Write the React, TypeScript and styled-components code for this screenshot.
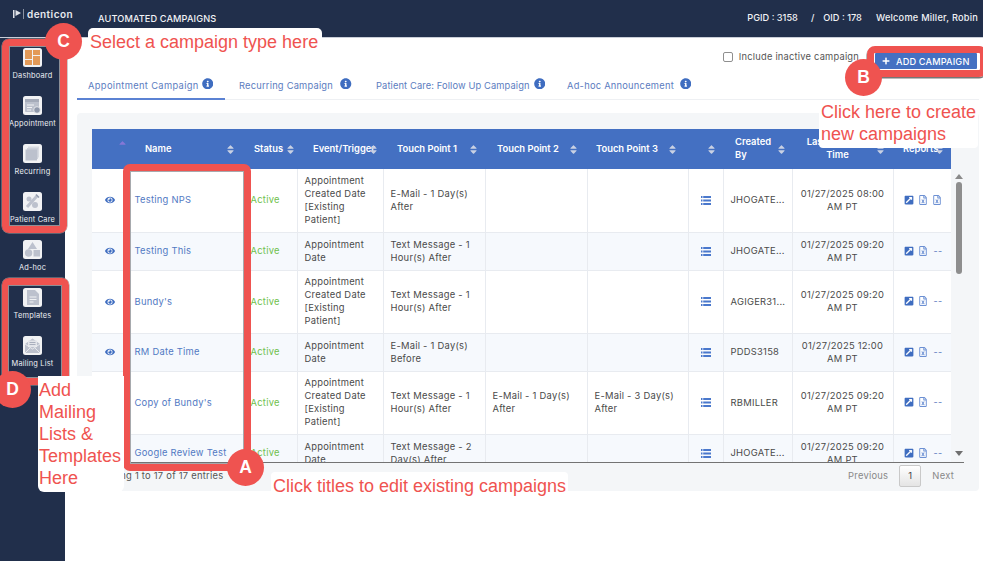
import React from "react";
import styled, { createGlobalStyle } from "styled-components";
import { FaEye, FaInfoCircle, FaExternalLinkSquareAlt, FaRegFileExcel, FaPlus, FaSort, FaSortUp } from "react-icons/fa";

const Global = createGlobalStyle`
  html, body { margin: 0; padding: 0; background: #fff; }
  body { font-family: Inter, "Open Sans", sans-serif; }
  * { box-sizing: border-box; }
`;

const Page = styled.div`
  position: relative; width: 983px; height: 561px; overflow: hidden;
  display: flex; flex-direction: column; background: #fff;
`;
const Header = styled.header`
  height: 38px; background: #212f4b; border-bottom: 1px solid #c9ced8; color: #fff;
  display: flex; align-items: center; padding-right: 5px; flex: none;
`;
const Logo = styled.div`
  width: 98px; padding-left: 13px; padding-bottom: 9px; display: flex; align-items: center; gap: 3px;
  font-size: 10px; font-weight: 600; letter-spacing: .45px; color: #e8eaef;
`;
const Title = styled.div`font-size: 9.2px; font-weight: 500; letter-spacing: .12px; color: #f2f3f6;`;
const HeaderRight = styled.div`
  margin-left: auto; display: flex; align-items: center; font-size: 9.2px; font-weight: 500; padding-bottom: 3px;
  color: #f2f3f6;
`;
const Sep = styled.span`margin: 0 9px 0 13px;`;
const Welcome = styled.span`margin-left: 14px; letter-spacing: .24px;`;

const Body = styled.div`flex: 1; display: flex; min-height: 0;`;
const Sidebar = styled.nav`
  width: 65px; flex: none; background: #212f4b; padding-top: 10px;
  display: flex; flex-direction: column; align-items: center;
`;
const NavItem = styled.div`
  height: 48px; width: 100%; display: flex; flex-direction: column; align-items: center;
  font-size: 7.4px; color: #eef0f4; letter-spacing: .2px; white-space: nowrap;
`;
const Tile = styled.div`
  width: 19px; height: 19px; border-radius: 2.5px; background: #f1f2f4; margin-bottom: 4px;
  display: flex; align-items: center; justify-content: center;
`;

const Main = styled.main`flex: 1; padding: 0 4px 0 12px; min-width: 0;`;
const OptionRow = styled.div`
  height: 36px; display: flex; align-items: center; justify-content: flex-end; padding-right: 120px; padding-top: 1px;
  font-size: 9.3px; color: #555; gap: 6px; letter-spacing: .22px;
`;
const Check = styled.span`
  width: 10px; height: 10px; border: 1px solid #8f8f8f; border-radius: 2px; background: #fff; flex: none;
`;
const Tabs = styled.div`
  height: 26px; display: flex; border-bottom: 1.5px solid #eef0f3;
`;
const Tab = styled.div<{ $active?: boolean; $w: number; $pad: number; $gap: number; $track: number }>`
  width: ${p => p.$w}px; height: 26px; padding-left: ${p => p.$pad}px; padding-bottom: 2px;
  display: flex; align-items: center; gap: ${p => p.$gap}px; white-space: nowrap;
  font-size: 9.3px; letter-spacing: ${p => p.$track}px; color: #5b7cc0;
  border-bottom: 2px solid ${p => (p.$active ? "#5b82d3" : "transparent")};
  svg { color: #3f6dc0; font-size: 11.5px; flex: none; margin-top: -3px; }
`;
const Panel = styled.section`
  margin-top: 13px; height: 378px; background: #f4f6f8; border-radius: 4px; padding: 16px 14px 0 15px;
`;
const HeadTable = styled.table`
  table-layout: fixed; width: 859px; border-collapse: collapse; background: #4470c2; color: #fff;
`;
const Th = styled.th`
  height: 40px; padding: 0; font-size: 9.4px; font-weight: 600; text-align: left; line-height: 12.6px;
`;
const ThInner = styled.div<{ $l: number; $r: number; $center?: boolean }>`
  display: flex; align-items: center; padding-left: ${p => p.$l}px; padding-right: ${p => p.$r}px;
  span { flex: 1; min-width: 0; text-align: ${p => (p.$center ? "center" : "left")}; white-space: pre-line; }
  svg { color: #c9d1e3; font-size: 11px; flex: none; margin-left: -4px; }
`;
const EyeHead = styled.div`
  display: flex; justify-content: flex-end; padding: 0 2px 8px 0;
  svg { color: #8577d6; font-size: 11px; }
`;
const BodyArea = styled.div`display: flex; height: 293px;`;
const BodyClip = styled.div`width: 859px; height: 293px; overflow: hidden; flex: none;`;
const BodyTable = styled.table`
  table-layout: fixed; width: 859px; border-collapse: collapse; font-size: 9.4px; color: #4a4a4a; line-height: 12.8px;
`;
const Tr = styled.tr<{ $h: number }>`
  height: ${p => p.$h}px;
  &:nth-child(even) { background: #f6f9fd; }
  &:nth-child(odd) { background: #fff; }
`;
const Td = styled.td`
  padding: 1px 6px 0 7px; border: 1px solid #e8ebf0; border-top: 0; vertical-align: middle; letter-spacing: .25px;
  overflow: hidden;
`;
const EyeCell = styled(Td)`
  text-align: center; color: #3f6dc0; font-size: 10px; padding: 0; border-left: 0; border-right: 0;
  svg { display: block; margin: 0 auto; position: relative; left: -1px; }
`;
const NameCell = styled(Td)`color: #5279c3; padding-left: 4px;`;
const StatusCell = styled(Td)`color: #6fbf4e; padding: 1px 0 0 3px;`;
const ListCell = styled(Td)`
  padding: 0; color: #4a78cc;
  svg { display: block; margin: 0 auto; }
`;
const CreatedCell = styled(Td)`padding: 1px 0 0 7px; white-space: nowrap;`;
const TimeCell = styled(Td)`text-align: center; padding: 1px 6px 0;`;
const ReportCell = styled(Td)`padding: 0 0 0 10px; border-right: 0;`;
const Reports = styled.div`
  display: flex; align-items: center; gap: 4px; color: #3f6dc0; font-size: 10px;
  svg { flex: none; }
  svg + svg { color: #6c90d3; }
  span { color: #5b7cc0; font-size: 9px; margin-left: 2px; }
`;
const ScrollBar = styled.div`
  width: 15px; height: 293px; padding-top: 5px; display: flex; flex-direction: column; align-items: center; flex: none;
`;
const Arrow = styled.div<{ $down?: boolean }>`
  width: 0; height: 0; border-left: 4px solid transparent; border-right: 4px solid transparent;
  ${p => (p.$down ? "border-top: 5px solid #6f6f6f; margin-top: auto; margin-bottom: 6px;" : "border-bottom: 5px solid #8a8a8a;")}
`;
const Thumb = styled.div`
  width: 6px; height: 92px; background: #8e8e8e; border-radius: 3px; margin-top: 3px;
`;
const Footer = styled.div`
  width: 872px; border-top: 1px solid #737373; display: flex; align-items: center; height: 26px;
  font-size: 9.4px; color: #555; letter-spacing: .25px; padding-right: 10px;
`;
const Pager = styled.div`margin-left: auto; display: flex; align-items: center; color: #888;`;
const PageButton = styled.span`
  width: 22px; height: 22px; margin: 0 11px; border: 1px solid #c9c9c9; border-radius: 2px;
  background: linear-gradient(#fff, #e4e4e4); display: flex; align-items: center; justify-content: center; color: #444;
`;

const RedFrame = styled.div`
  position: absolute; border: 7px solid #ef5350; border-radius: 7px;
  box-shadow: inset 0 0 0 1px #8c8f96, 0 0 0 .5px #9a9a9a;
`;
const FrameA = styled(RedFrame)`left: 123px; top: 164px; width: 128px; height: 307px; box-shadow: inset 0 0 0 1px #a7a9ad;`;
const FrameB = styled(RedFrame)`left: 867px; top: 46px; width: 120px; height: 31px; border-radius: 8px; box-shadow: 0 1px 0 .5px #777;`;
const FrameC = styled(RedFrame)`left: 2px; top: 39px; width: 65px; height: 194px;`;
const FrameD = styled(RedFrame)`left: 2px; top: 278px; width: 67px; height: 107px; border-width: 7px 7px 7px 6px;`;

const Label = styled.div`
  position: absolute; background: #fff; color: #ef5350; border-radius: 4px;
  font-family: "Liberation Sans", Arial, sans-serif; font-size: 18px; line-height: 22px;
`;
const LabelA = styled(Label)`left: 271px; top: 472px; width: 297px; height: 20px; padding-left: 2px; line-height: 28px; border-radius: 4px 4px 0 0;`;
const LabelB = styled(Label)`left: 819px; top: 100px; width: 159px; height: 48px; padding: 1px 0 0 2px;`;
const LabelC = styled(Label)`left: 88px; top: 28px; width: 234px; height: 26px; padding: 3px 0 0 2px; border-radius: 5px 5px 0 0;`;
const LabelD = styled(Label)`left: 38px; top: 376px; width: 86px; height: 116px; padding: 3px 0 0 1px; border-radius: 0 0 6px 6px;`;

const Badge = styled.div`
  position: absolute; width: 37px; height: 37px; border-radius: 50%; background: #ef5350; color: #fff;
  display: flex; align-items: center; justify-content: center;
  font-family: "Liberation Sans", Arial, sans-serif; font-weight: 700; font-size: 17.5px;
`;
const BadgeA = styled(Badge)`left: 227px; top: 449px;`;
const BadgeB = styled(Badge)`left: 845px; top: 59px;`;
const BadgeC = styled(Badge)`left: 45px; top: 23px;`;
const BadgeD = styled(Badge)`left: -6px; top: 371px;`;

const AddButton = styled.button`
  position: absolute; left: 875px; top: 53px; width: 102px; height: 16px; border: 0; padding: 0 0 0 7px;
  background: #4470c2; color: #fff; font: 500 9.2px Inter, sans-serif; letter-spacing: .15px;
  display: flex; align-items: center; gap: 6px; border-radius: 1px;
  svg { font-size: 8px; }
`;

const ListIcon = () => (
  <svg width="10" height="9" viewBox="0 0 10 9" fill="currentColor">
    <rect x="0" y="0" width="1.5" height="2" /><rect x="2.2" y="0" width="7.8" height="2" />
    <rect x="0" y="3.5" width="1.5" height="2" /><rect x="2.2" y="3.5" width="7.8" height="2" />
    <rect x="0" y="7" width="1.5" height="2" /><rect x="2.2" y="7" width="7.8" height="2" />
  </svg>
);

const G = "#bcc1cd";
const Icons: Record<string, React.ReactNode> = {
  Dashboard: (
    <svg width="17" height="17" viewBox="0 0 17 17"><rect x="1" y="1" width="7" height="9" fill="#e39a58"/><rect x="9" y="1" width="7" height="5" fill="#e39a58"/><rect x="9" y="7" width="7" height="9" fill="#e39a58"/><rect x="1" y="11" width="7" height="5" fill="#e39a58"/></svg>
  ),
  Appointment: (
    <svg width="17" height="17" viewBox="0 0 17 17"><rect x="1" y="2" width="14" height="13" rx="1" fill={G}/><rect x="1" y="2" width="14" height="3" fill="#a5abb9"/><path d="M3 8h7M3 10.5h5M3 13h4" stroke="#f1f2f4" strokeWidth="1"/><circle cx="13" cy="13" r="3.3" fill="#8f98ab" stroke="#f1f2f4" strokeWidth=".8"/></svg>
  ),
  Recurring: (
    <svg width="17" height="17" viewBox="0 0 17 17"><rect x="4" y="1.5" width="11" height="11" fill="#d8dbe2"/><rect x="3" y="3" width="11" height="11" fill="#cdd1da"/><rect x="1.5" y="4.5" width="11.5" height="11" fill={G}/></svg>
  ),
  "Patient Care": (
    <svg width="17" height="17" viewBox="0 0 17 17"><path d="M3 14 L13 3" stroke={G} strokeWidth="3"/><circle cx="5" cy="6" r="2.5" fill={G}/><circle cx="11" cy="12" r="3" fill={G}/><path d="M12 1.5l3 3" stroke="#8f98ab" strokeWidth="1.5"/></svg>
  ),
  "Ad-hoc": (
    <svg width="17" height="17" viewBox="0 0 17 17"><path d="M8.5 1l4.5 7H4z" fill={G}/><circle cx="4.6" cy="12" r="3.7" fill={G}/><rect x="9.5" y="9" width="6.5" height="6.5" fill={G}/></svg>
  ),
  Templates: (
    <svg width="17" height="17" viewBox="0 0 17 17"><path d="M3 1h8l4 4v11H3z" fill={G}/><path d="M5.5 8h7M5.5 10.5h7M5.5 13h4" stroke="#f1f2f4" strokeWidth="1"/></svg>
  ),
  "Mailing List": (
    <svg width="17" height="17" viewBox="0 0 17 17"><path d="M1 7l7.5-5.5L16 7v9H1z" fill={G}/><rect x="4" y="3.5" width="9" height="6.5" fill="#e3e5ea"/><path d="M5.5 5.5h6M5.5 7.5h6" stroke="#9aa1b1" strokeWidth=".8"/><path d="M1 7l7.5 5L16 7M1 16l5-5M16 16l-5-5" stroke="#f1f2f4" strokeWidth=".8" fill="none"/></svg>
  ),
};
const navItems = ["Dashboard", "Appointment", "Recurring", "Patient Care", "Ad-hoc", "Templates", "Mailing List"];

const widths = [38, 117, 50, 86, 102, 102, 101, 35, 69, 101, 58];
const Cols = () => <colgroup>{widths.map((w, i) => <col key={i} style={{ width: w }} />)}</colgroup>;

const heads: { t: string; l: number; r: number; center?: boolean }[] = [
  { t: "Name", l: 15, r: 11 },
  { t: "Status", l: 7, r: 1 },
  { t: "Event/Trigger", l: 16, r: 4 },
  { t: "Touch Point 1", l: 14, r: 6 },
  { t: "Touch Point 2", l: 12, r: 8 },
  { t: "Touch Point 3", l: 9, r: 10 },
  { t: "", l: 0, r: 6 },
  { t: "Created\nBy", l: 12, r: 5 },
  { t: "Last Modified\nTime", l: 4, r: 7, center: true },
  { t: "Reports", l: 10, r: 6 },
];

const rows = [
  { h: 63, name: "Testing NPS", ev: "Appointment\nCreated Date\n[Existing\nPatient]", t1: "E-Mail - 1 Day(s)\nAfter", t2: "", t3: "", by: "JHOGATE...", time: "01/27/2025 08:00\nAM PT", x2: true },
  { h: 38, name: "Testing This", ev: "Appointment\nDate", t1: "Text Message - 1\nHour(s) After", t2: "", t3: "", by: "JHOGATE...", time: "01/27/2025 09:20\nAM PT" },
  { h: 63, name: "Bundy's", ev: "Appointment\nCreated Date\n[Existing\nPatient]", t1: "Text Message - 1\nHour(s) After", t2: "", t3: "", by: "AGIGER31...", time: "01/27/2025 09:20\nAM PT" },
  { h: 38, name: "RM Date Time", ev: "Appointment\nDate", t1: "E-Mail - 1 Day(s)\nBefore", t2: "", t3: "", by: "PDDS3158", time: "01/27/2025 12:00\nAM PT" },
  { h: 63, name: "Copy of Bundy's", ev: "Appointment\nCreated Date\n[Existing\nPatient]", t1: "Text Message - 1\nHour(s) After", t2: "E-Mail - 1 Day(s)\nAfter", t3: "E-Mail - 3 Day(s)\nAfter", by: "RBMILLER", time: "01/27/2025 09:20\nAM PT" },
  { h: 38, name: "Google Review Test", ev: "Appointment\nDate", t1: "Text Message - 2\nDay(s) After", t2: "", t3: "", by: "JHOGATE...", time: "01/27/2025 09:20\nAM PT" },
];

const Pre = styled.div`white-space: pre-line;`;

export default function App() {
  return (
    <Page>
      <Global />
      <Header>
        <Logo>
          <svg width="11" height="10" viewBox="0 0 11 10"><path d="M0 1h1.5v8H0zM2.5 1L8 4 2.5 7z" fill="#dfe2e8"/><path d="M10.5 0v10" stroke="#b8bdc8" strokeWidth=".7"/></svg>
          <span>denticon</span>
        </Logo>
        <Title>AUTOMATED CAMPAIGNS</Title>
        <HeaderRight>
          <span>PGID : 3158</span><Sep>/</Sep><span>OID : 178</span><Welcome>Welcome Miller, Robin</Welcome>
        </HeaderRight>
      </Header>
      <Body>
        <Sidebar>
          {navItems.map(n => (
            <NavItem key={n}><Tile>{Icons[n]}</Tile>{n}</NavItem>
          ))}
        </Sidebar>
        <Main>
          <OptionRow><Check />Include inactive campaign</OptionRow>
          <Tabs>
            <Tab $active $w={148} $pad={11} $gap={3} $track={0.36}>Appointment Campaign <FaInfoCircle /></Tab>
            <Tab $w={137} $pad={14} $gap={7} $track={0.22}>Recurring Campaign <FaInfoCircle /></Tab>
            <Tab $w={195} $pad={14} $gap={4} $track={0.12}>Patient Care: Follow Up Campaign <FaInfoCircle /></Tab>
            <Tab $w={130} $pad={10} $gap={6} $track={0.25}>Ad-hoc Announcement <FaInfoCircle /></Tab>
          </Tabs>
          <Panel>
            <HeadTable>
              <Cols />
              <thead>
                <tr>
                  <Th><EyeHead><FaSortUp /></EyeHead></Th>
                  {heads.map((h, i) => (
                    <Th key={i}>
                      <ThInner $l={h.l} $r={h.r} $center={h.center}><span>{h.t}</span><FaSort /></ThInner>
                    </Th>
                  ))}
                </tr>
              </thead>
            </HeadTable>
            <BodyArea>
              <BodyClip>
                <BodyTable>
                  <Cols />
                  <tbody>
                    {rows.map(r => (
                      <Tr key={r.name} $h={r.h}>
                        <EyeCell><FaEye /></EyeCell>
                        <NameCell>{r.name}</NameCell>
                        <StatusCell>Active</StatusCell>
                        <Td><Pre>{r.ev}</Pre></Td>
                        <Td><Pre>{r.t1}</Pre></Td>
                        <Td><Pre>{r.t2}</Pre></Td>
                        <Td><Pre>{r.t3}</Pre></Td>
                        <ListCell><ListIcon /></ListCell>
                        <CreatedCell>{r.by}</CreatedCell>
                        <TimeCell><Pre>{r.time}</Pre></TimeCell>
                        <ReportCell>
                          <Reports>
                            <FaExternalLinkSquareAlt />
                            <FaRegFileExcel />
                            {r.x2 ? <FaRegFileExcel /> : <span>--</span>}
                          </Reports>
                        </ReportCell>
                      </Tr>
                    ))}
                  </tbody>
                </BodyTable>
              </BodyClip>
              <ScrollBar><Arrow /><Thumb /><Arrow $down /></ScrollBar>
            </BodyArea>
            <Footer>
              <span>Showing 1 to 17 of 17 entries</span>
              <Pager>Previous<PageButton>1</PageButton>Next</Pager>
            </Footer>
          </Panel>
        </Main>
      </Body>

      <AddButton><FaPlus />ADD CAMPAIGN</AddButton>
      <FrameC /><FrameD /><FrameA /><FrameB />
      <LabelC>Select a campaign type here</LabelC>
      <LabelB>Click here to create<br />new campaigns</LabelB>
      <LabelD>Add<br />Mailing<br />Lists &amp;<br />Templates<br />Here</LabelD>
      <LabelA>Click titles to edit existing campaigns</LabelA>
      <BadgeA>A</BadgeA><BadgeB>B</BadgeB><BadgeC>C</BadgeC><BadgeD>D</BadgeD>
    </Page>
  );
}
